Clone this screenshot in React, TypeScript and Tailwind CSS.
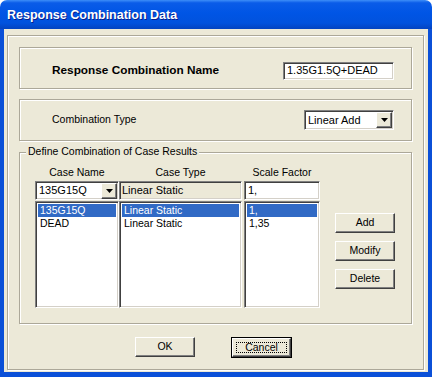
import React from "react";

const sunken =
  "border border-t-[#808080] border-l-[#808080] border-b-white border-r-white shadow-[inset_1px_1px_0_#404040,inset_-1px_-1px_0_#d4d0c8]";
const raised =
  "border border-t-white border-l-white border-b-[#404040] border-r-[#404040] shadow-[inset_-1px_-1px_0_#808080]";
const etched = "border border-[#aca899] shadow-[inset_1px_1px_0_#fff,1px_1px_0_#fff]";

function DropArrow() {
  return (
    <div className={`w-[16px] h-[16px] bg-[#ece9d8] flex items-center justify-center ${raised}`}>
      <svg width="7" height="4" viewBox="0 0 7 4">
        <polygon points="0,0 7,0 3.5,4" fill="#000" />
      </svg>
    </div>
  );
}

function Button({ label, w = "w-[60px]" }: { label: string; w?: string }) {
  return (
    <div className={`${w} h-[20px] bg-[#ece9d8] flex items-center justify-center ${raised}`}>
      {label}
    </div>
  );
}

const rows = [
  { name: "135G15Q", type: "Linear Static", sf: "1," },
  { name: "DEAD", type: "Linear Static", sf: "1,35" },
];

function List({ field, w }: { field: "name" | "type" | "sf"; w: string }) {
  return (
    <div className={`${w} mt-[1px] h-[107px] bg-white p-[2px] ${sunken}`}>
      {rows.map((r, i) => (
        <div
          key={i}
          className={`h-[13px] leading-[13px] pl-[2px] ${i === 0 ? "bg-[#316ac5] text-white" : ""}`}
        >
          {r[field]}
        </div>
      ))}
    </div>
  );
}

export default function App() {
  return (
    <div className="w-[432px] h-[377px] flex flex-col font-['Liberation_Sans',Arial,sans-serif] text-[10.5px] text-black">
      {/* title bar */}
      <div className="h-[29px] shrink-0 flex items-center pl-[7px] pt-[2px] rounded-t-[7px] bg-[linear-gradient(to_bottom,#3d8ef8_0%,#0a5ce8_10%,#0055e5_45%,#0152dd_80%,#0343c0_100%)]">
        <span className="text-white font-bold text-[12.5px] [text-shadow:1px_1px_0_#0a1e8a]">
          Response Combination Data
        </span>
      </div>

      {/* body */}
      <div className="flex-1 flex flex-col bg-[#ece9d8] border-l-4 border-r-4 border-b-[5px] border-[#0b50d8]">
        <div className={`ml-[3px] mr-[4px] mt-[6px] h-[335px] pl-[11px] ${etched}`}>
          {/* name */}
          <div className={`mt-[11px] w-[393px] h-[42px] flex items-center pl-[32px] pr-[17px] pt-[5px] ${etched}`}>
            <span className="font-bold text-[11.8px]">Response Combination Name</span>
            <div className={`ml-auto w-[111px] h-[18px] bg-white flex items-center pl-[3px] text-[11px] ${sunken}`}>
              1.35G1.5Q+DEAD
            </div>
          </div>

          {/* type */}
          <div className={`mt-[10px] w-[393px] h-[42px] flex items-center pl-[32px] pr-[17px] ${etched}`}>
            <span>Combination Type</span>
            <div className={`ml-auto w-[90px] h-[20px] bg-white flex items-center justify-between pl-[3px] pr-[1px] text-[11px] ${sunken}`}>
              <span>Linear Add</span>
              <DropArrow />
            </div>
          </div>

          {/* define combination */}
          <div className={`relative mt-[11px] w-[393px] h-[172px] pl-[15px] pt-[12px] flex ${etched}`}>
            <span className="absolute left-[6px] -top-[8px] px-[2px] bg-[#ece9d8] leading-[13px]">
              Define Combination of Case Results
            </span>

            <div className="w-[84px]">
              <div className="h-[14px] leading-[14px] text-center">Case Name</div>
              <div className={`mt-[2px] h-[19px] bg-white flex items-center justify-between pl-[3px] pr-[1px] text-[11px] ${sunken}`}>
                <span>135G15Q</span>
                <DropArrow />
              </div>
              <List field="name" w="w-[84px]" />
            </div>

            <div className="w-[123px]">
              <div className="h-[14px] leading-[14px] text-center">Case Type</div>
              <div className={`mt-[2px] h-[19px] bg-[#ece9d8] flex items-center pl-[2px] text-[11px] ${sunken}`}>
                Linear Static
              </div>
              <List field="type" w="w-[123px]" />
            </div>

            <div className="ml-[2px] w-[76px]">
              <div className="h-[14px] leading-[14px] text-center">Scale Factor</div>
              <div className={`mt-[2px] h-[19px] bg-white flex items-center pl-[3px] text-[11px] ${sunken}`}>1,</div>
              <List field="sf" w="w-[76px]" />
            </div>

            <div className="ml-[15px] pt-[48px] flex flex-col gap-[8px]">
              <Button label="Add" />
              <Button label="Modify" />
              <Button label="Delete" />
            </div>
          </div>

          {/* ok / cancel */}
          <div className="mt-[13px] flex pl-[116px] gap-[36px]">
            <Button label="OK" />
            <div className="w-[61px] h-[21px] border border-black">
              <div className={`w-full h-full bg-[#ece9d8] p-[3px] ${raised}`}>
                <div className="w-full h-full border border-dotted border-black flex items-center justify-center leading-none">
                  Cancel
                </div>
              </div>
            </div>
          </div>
        </div>
      </div>
    </div>
  );
}
